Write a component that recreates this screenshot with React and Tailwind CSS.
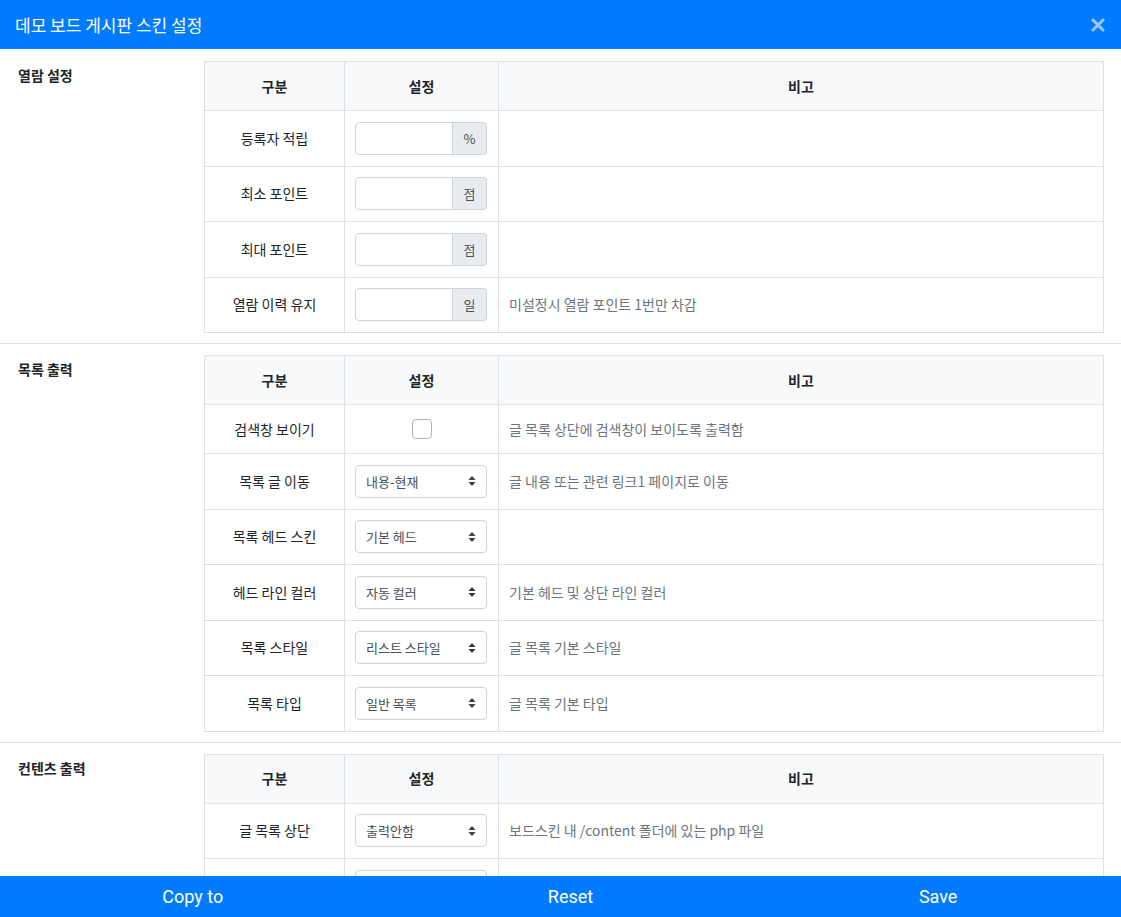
import React from 'react'

const font = { fontFamily: '"Noto Sans CJK KR", "Noto Sans", sans-serif' }

function SortIcon() {
  return (
    <svg width="8" height="12" viewBox="0 0 8 12" className="text-[#343a40]">
      <path d="M4 1 L7.5 5 H0.5 Z" fill="currentColor" />
      <path d="M4 11 L7.5 7 H0.5 Z" fill="currentColor" />
    </svg>
  )
}

function InputAddon({ unit }) {
  return (
    <div className="flex h-[33px] w-[132px]">
      <div className="w-[98px] rounded-l border border-[#ced4da] bg-white" />
      <div className="flex w-[34px] items-center justify-center rounded-r border border-l-0 border-[#ced4da] bg-[#e9ecef] text-[13px] text-[#495057]">
        {unit}
      </div>
    </div>
  )
}

function Select({ value }) {
  return (
    <div className="flex h-[33px] w-[132px] items-center justify-between rounded border border-[#ced4da] bg-white pl-[10px] pr-[10px] text-[13px] text-[#495057]">
      <span>{value}</span>
      <SortIcon />
    </div>
  )
}

function Checkbox() {
  return <div className="mx-auto h-[20px] w-[20px] rounded border border-[#adb5bd] bg-white" />
}

function Section({ title, rows, first }) {
  return (
    <div className={`flex border-b border-[#dee2e6] pb-[10px] pl-[18px] pr-[17px] ${first ? 'pt-[12px]' : 'pt-[11px]'}`}>
      <div className="w-[186px] shrink-0 pt-[4px] text-[14px] font-bold text-[#212529]">{title}</div>
      <table className="w-full border-collapse text-[14px] text-[#212529]">
        <thead>
          <tr className="h-[49px] bg-[#f8f9fa]">
            <th className="w-[140px] border border-[#dee2e6] font-bold">구분</th>
            <th className="w-[154px] border border-[#dee2e6] font-bold">설정</th>
            <th className="border border-[#dee2e6] font-bold">비고</th>
          </tr>
        </thead>
        <tbody>
          {rows.map((r, i) => (
            <tr key={i} className={r.type === 'check' ? 'h-[49px]' : 'h-[55.5px]'}>
              <td className="border border-[#dee2e6] text-center">{r.label}</td>
              <td className="border border-[#dee2e6] px-[10px]">
                {r.type === 'input' && <InputAddon unit={r.unit} />}
                {r.type === 'select' && <Select value={r.value} />}
                {r.type === 'check' && <Checkbox />}
              </td>
              <td className="border border-[#dee2e6] px-[10px] text-[#6c757d]">{r.note}</td>
            </tr>
          ))}
        </tbody>
      </table>
    </div>
  )
}

const viewRows = [
  { label: '등록자 적립', type: 'input', unit: '%' },
  { label: '최소 포인트', type: 'input', unit: '점' },
  { label: '최대 포인트', type: 'input', unit: '점' },
  { label: '열람 이력 유지', type: 'input', unit: '일', note: '미설정시 열람 포인트 1번만 차감' },
]

const listRows = [
  { label: '검색창 보이기', type: 'check', note: '글 목록 상단에 검색창이 보이도록 출력함' },
  { label: '목록 글 이동', type: 'select', value: '내용-현재', note: '글 내용 또는 관련 링크1 페이지로 이동' },
  { label: '목록 헤드 스킨', type: 'select', value: '기본 헤드' },
  { label: '헤드 라인 컬러', type: 'select', value: '자동 컬러', note: '기본 헤드 및 상단 라인 컬러' },
  { label: '목록 스타일', type: 'select', value: '리스트 스타일', note: '글 목록 기본 스타일' },
  { label: '목록 타입', type: 'select', value: '일반 목록', note: '글 목록 기본 타입' },
]

const contentRows = [
  { label: '글 목록 상단', type: 'select', value: '출력안함', note: '보드스킨 내 /content 폴더에 있는 php 파일' },
  { label: '글 목록 하단', type: 'select', value: '출력안함', note: '보드스킨 내 /content 폴더에 있는 php 파일' },
]

export default function App() {
  return (
    <div className="flex h-[917px] flex-col overflow-hidden bg-white" style={font}>
      <div className="flex h-[49px] shrink-0 items-center justify-between bg-[#007bff] pl-[15px] pr-[16px]">
        <h1 className="text-[17px] text-white">데모 보드 게시판 스킨 설정</h1>
        <svg width="14" height="14" viewBox="0 0 14 14">
          <path d="M2 2 L12 12 M12 2 L2 12" stroke="#9cc8ff" strokeWidth="3" strokeLinecap="round" />
        </svg>
      </div>
      <div className="flex-1 overflow-hidden">
        <Section title="열람 설정" rows={viewRows} first />
        <Section title="목록 출력" rows={listRows} />
        <Section title="컨텐츠 출력" rows={contentRows} />
      </div>
      <div className="grid h-[41px] shrink-0 grid-cols-3 bg-[#007bff] text-[18px] text-white" style={{ fontFamily: 'Roboto, sans-serif' }}>
        <button className="pl-[12px]">Copy to</button>
        <button className="pl-[20px]">Reset</button>
        <button className="pl-[8px]">Save</button>
      </div>
    </div>
  )
}
